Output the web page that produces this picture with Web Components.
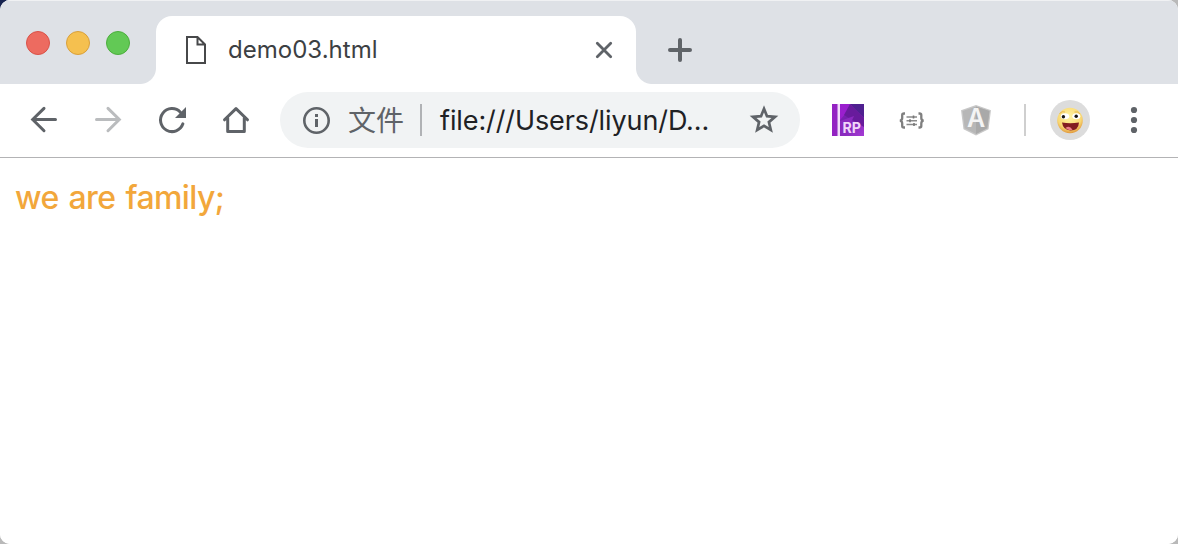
<!DOCTYPE html>
<html lang="zh-CN">
<head>
<meta charset="utf-8">
<title>demo03.html</title>
<style>
html, body { margin: 0; height: 100%; overflow: hidden; }
body { background: linear-gradient(#16234f, #16234f) 0 0 / 20px 20px no-repeat #b9b9b9; font-family: Inter, "Noto Sans CJK SC", sans-serif; }
</style>
</head>
<body>
<browser-window>
  <tab-strip slot="tabs"><browser-tab>demo03.html</browser-tab></tab-strip>
  <tool-bar slot="toolbar">
    <address-bar><span slot="scheme">文件</span>file:///Users/liyun/D...</address-bar>
  </tool-bar>
  <page-view>we are family;</page-view>
</browser-window>
<script>
const ICONS = {
  file: [24, 32, '<path d="M3 3H13.5L21 10.5V29H3Z M13.5 3V10.5H21" fill="none" stroke="#47484a" stroke-width="2"/>'],
  close: [20, 20, '<path d="M3.3 3.3 16.7 16.7M16.7 3.3 3.3 16.7" stroke="#5f6368" stroke-width="2.8" stroke-linecap="round"/>'],
  plus: [24, 24, '<path d="M12 2V22M2 12H22" stroke="#5f6368" stroke-width="4" stroke-linecap="round"/>'],
  back: [32, 32, '<path d="M27.5 15.5H4.7M16 4.4 4.7 15.5 16 26.7" fill="none" stroke="#5f6368" stroke-width="3" stroke-linecap="round" stroke-linejoin="miter"/>'],
  forward: [32, 32, '<path d="M4.5 15.5H27.3M16 4.4 27.3 15.5 16 26.7" fill="none" stroke="#babcbe" stroke-width="3" stroke-linecap="round" stroke-linejoin="miter"/>'],
  reload: [32, 32, '<path d="M26.9 19.8A11.5 11.5 0 1 1 24.4 8.2" fill="none" stroke="#5f6368" stroke-width="3" stroke-linecap="round"/><path d="M30 3V14H19Z" fill="#5f6368"/>'],
  home: [32, 32, '<path d="M4.5 15.8 16 4.6 27.5 15.8M7.7 14V27.5H24.3V14" fill="none" stroke="#5f6368" stroke-width="3" stroke-linecap="round" stroke-linejoin="round"/>'],
  info: [28, 28, '<circle cx="14.5" cy="14.5" r="12.2" fill="none" stroke="#5f6368" stroke-width="2.6"/><path d="M13 8h3v3h-3zM13 13h3v8h-3z" fill="#5f6368"/>'],
  star: [32, 32, '<path d="M16 4.8 19 12.2 27 12.9 20.9 18.1 22.8 26 16 21.8 9.2 26 11.1 18.1 5 12.9 13 12.2Z" fill="none" stroke="#5f6368" stroke-width="2.7"/>'],
  rp: [32, 32, '<defs><linearGradient id="g" x2="1" y2="1"><stop stop-color="#9b20d2"/><stop offset=".45" stop-color="#7420ac"/><stop offset="1" stop-color="#a63bd5"/></linearGradient></defs><path d="M0 0H32V32H0Z" fill="url(#g)"/><path d="M8 0H22L8 16Z" fill="#9a1fce"/><path d="M18 0H32V14Z" fill="#4f2090"/><path d="M18 0 32 14V23L12 11Z" fill="#681b9c"/><path d="M8 17 22 12 13 32H8Z" fill="#8a2abf"/><path d="M0 0H5.5V32H0Z" fill="#9322c2"/><path d="M5.5 0H8V32H5.5Z" fill="#f2dcfa"/><text x="10.5" y="28.8" textLength="18.5" lengthAdjust="spacingAndGlyphs" font-family="Inter, sans-serif" font-size="14.5" font-weight="700" fill="#f0d6fa">RP</text>'],
  braces: [28, 20, '<path d="M7 3.5H6Q4.2 3.5 4.2 5V8Q4.2 10.2 2 10.7Q4.2 11.2 4.2 13.5V16Q4.2 17.5 6 17.5H7M20.5 3.5H21.5Q23.3 3.5 23.3 5V8Q23.3 10.2 25.5 10.7Q23.3 11.2 23.3 13.5V16Q23.3 17.5 21.5 17.5H20.5" fill="none" stroke="#7f7f7f" stroke-width="2.3"/><path d="M8.5 7H19M8.5 10.7H19M8.5 14.4H19" stroke="#8b8b8b" stroke-width="1.5"/><path d="M15.5 5.5V8.5M12 9.2V12.2M16 12.9V15.9" stroke="#777" stroke-width="1.6"/>'],
  angular: [32, 32, '<path d="M16 1 31 6.2 28.5 25.2 16 31.5 3.5 25.2 1 6.2Z" fill="#c8c8c8"/><path d="M16 2.4 29.5 7 27.3 24.2 16 30 4.7 24.2 2.5 7Z" fill="#b7b7b7"/><path d="M16 2.4 29.5 7 27.3 24.2 16 30Z" fill="#a9a9a9"/><text x="16" y="22.8" text-anchor="middle" font-family="Inter, sans-serif" font-size="25" font-weight="600" fill="#f4f4f4">A</text>'],
  face: [40, 40, '<defs><radialGradient id="f" cx=".48" cy=".35" r=".68"><stop stop-color="#fff3a2"/><stop offset=".68" stop-color="#f9d873"/><stop offset="1" stop-color="#dd8f36"/></radialGradient></defs><circle cx="20" cy="20" r="20" fill="#dcdcdc"/><circle cx="20" cy="20.5" r="12.8" fill="url(#f)"/><ellipse cx="15" cy="16.2" rx="4.2" ry="3" fill="#fff"/><ellipse cx="26.3" cy="16.2" rx="4" ry="3" fill="#fff"/><circle cx="13.4" cy="16.7" r="1.7" fill="#171513"/><circle cx="26.2" cy="16.2" r="1.7" fill="#171513"/><path d="M9.5 13.5Q12 10.8 15 12M24.5 12Q28 11 30 14" fill="none" stroke="#dfac42" stroke-width=".8"/><path d="M12 22.5Q20 24 29 22.5Q28.5 30.5 20.5 30.5Q13 30 12 22.5Z" fill="#821c21"/><path d="M15.5 28Q19.5 25 22.5 29.8Q18.5 31 15.5 28Z" fill="#eb7d87"/>'],
  menu: [8, 28, '<g fill="#5f6368"><circle cx="4" cy="4" r="3.1"/><circle cx="4" cy="14" r="3.1"/><circle cx="4" cy="24" r="3.1"/></g>']
};

function define(name, markup, setup) {
  const template = document.createElement('template');
  template.innerHTML = markup;
  customElements.define(name, class extends HTMLElement {
    constructor() {
      super();
      this.attachShadow({ mode: 'open' }).append(template.content.cloneNode(true));
    }
    connectedCallback() { if (setup) setup(this); }
  });
}

define('ui-icon', '<style>:host{display:grid;place-items:center;flex:none}svg{display:block}</style><div></div>', el => {
  const [w, h, art] = ICONS[el.getAttribute('name')];
  el.shadowRoot.querySelector('div').innerHTML =
    `<svg width="${w}" height="${h}" viewBox="0 0 ${w} ${h}" overflow="visible" aria-hidden="true">${art}</svg>`;
});

define('browser-window', `<style>
:host{display:flex;flex-direction:column;box-sizing:border-box;height:100vh;border-radius:10px;overflow:hidden;background:#fff}
</style><slot name="tabs"></slot><slot name="toolbar"></slot><slot></slot>`);

define('window-controls', `<style>
:host{display:flex;gap:16px;padding:31px 26px 0;box-sizing:border-box;width:156px;flex:none}
i{box-sizing:border-box;width:24px;height:24px;border-radius:50%;border:1px solid}
.r{background:#ed6b60;border-color:#d95248}.y{background:#f5c04f;border-color:#d9a03b}.g{background:#62c955;border-color:#4cae3d}
</style><i class="r"></i><i class="y"></i><i class="g"></i>`);

define('tab-strip', `<style>
:host{display:flex;height:84px;box-sizing:border-box;background:#dee1e6;border-top:1px solid #f0f1f3}
window-controls{margin-top:-1px}
slot{display:flex}
.new{width:24px;height:24px;margin:37px 0 0 32px}
</style><window-controls></window-controls><slot></slot><ui-icon class="new" name="plus"></ui-icon>`);

define('browser-tab', `<style>
:host{display:flex;align-items:center;box-sizing:border-box;position:relative;width:480px;height:68px;margin-top:15px;padding:0 22px 0 28px;background:#fff;border-radius:16px 16px 0 0;color:#3c4043;font-size:24px;line-height:32px}
:host::before,:host::after{content:"";position:absolute;bottom:0;width:16px;height:16px}
:host::before{left:-16px;background:radial-gradient(circle at 0 0,transparent 15.5px,#fff 16.5px)}
:host::after{right:-16px;background:radial-gradient(circle at 100% 0,transparent 15.5px,#fff 16.5px)}
.title{flex:1;margin-left:20px;letter-spacing:.02px;white-space:nowrap}
ui-icon{width:24px}.x{width:20px}
</style><ui-icon name="file"></ui-icon><span class="title"><slot></slot></span><ui-icon class="x" name="close"></ui-icon>`);

define('address-bar', `<style>
:host{display:flex;align-items:center;box-sizing:border-box;width:520px;height:56px;margin:0 16px 0 12px;padding:0 20px 0 22px;border-radius:28px;background:#f1f3f4;color:#202124;font-size:28px;line-height:40px}
.scheme{margin:2px 0 0 18px;width:56px;color:#5f6368;white-space:nowrap}
.rule{width:2px;height:32px;margin:0 18px 0 16px;background:#b0b2b5}
.url{flex:1;white-space:nowrap;margin-top:1px;font-size:27px;letter-spacing:-.1px}
</style><ui-icon name="info"></ui-icon><span class="scheme"><slot name="scheme"></slot></span><span class="rule"></span><span class="url"><slot></slot></span><ui-icon name="star"></ui-icon>`);

define('tool-bar', `<style>
:host{display:flex;align-items:center;height:74px;box-sizing:border-box;padding:0 12px 1px;border-bottom:1px solid #b3b3b5;background:#fff}
ui-icon{width:64px}
.rule{width:2px;height:32px;margin:0 24px 0 16px;background:#cfcfcf}
.face{width:40px}.menu{width:8px;margin-left:40px}
</style><ui-icon name="back"></ui-icon><ui-icon name="forward"></ui-icon><ui-icon name="reload"></ui-icon><ui-icon name="home"></ui-icon>
<slot></slot><ui-icon name="rp"></ui-icon><ui-icon name="braces"></ui-icon><ui-icon name="angular"></ui-icon>
<span class="rule"></span><ui-icon class="face" name="face"></ui-icon><ui-icon class="menu" name="menu"></ui-icon>`);

define('page-view', `<style>
:host{display:block;flex:1;padding:20px 15px;background:#fff;color:#f2a73b;font-size:32px;line-height:40px;font-weight:500;letter-spacing:-.6px;word-spacing:2px;white-space:nowrap}
</style><slot></slot>`);
</script>
</body>
</html>
